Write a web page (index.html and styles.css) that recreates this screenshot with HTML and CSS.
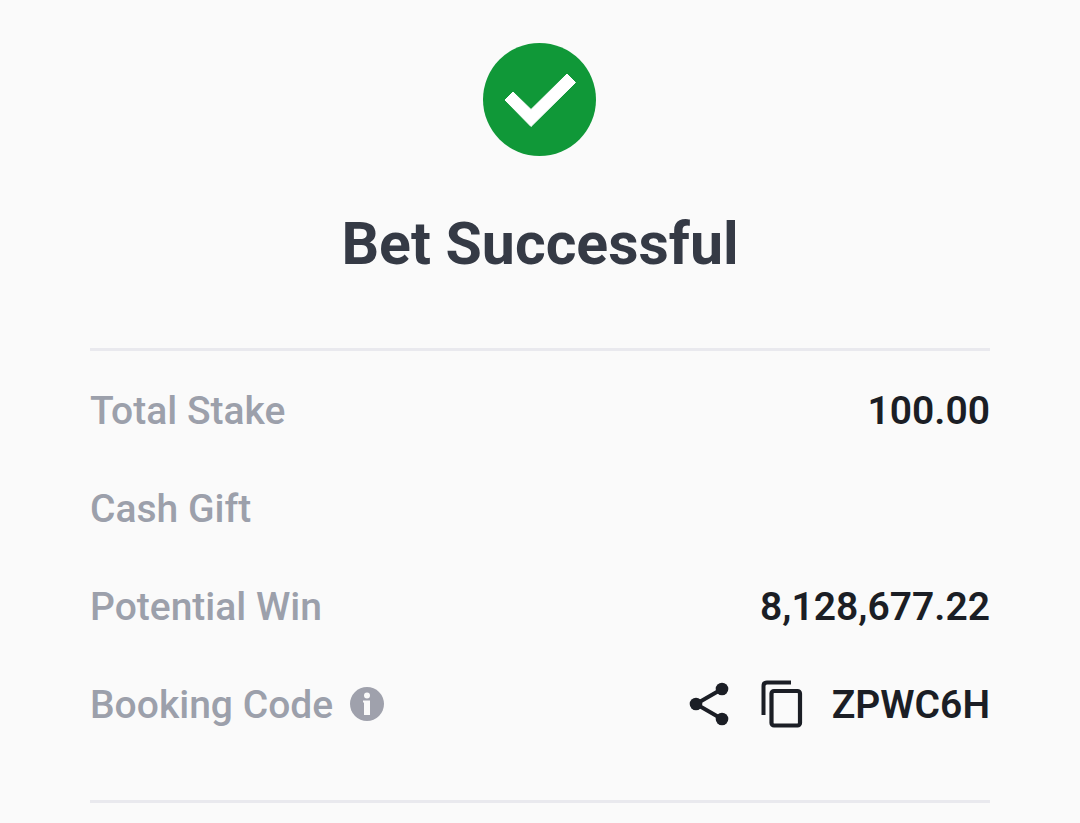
FILE: index.html
```html
<!DOCTYPE html>
<html lang="en">
<head>
<meta charset="utf-8">
<meta name="viewport" content="width=device-width, initial-scale=1">
<title>Bet Successful</title>
<link rel="stylesheet" href="styles.css">
</head>
<body>
<main class="receipt">
  <header class="status">
    <svg class="status-icon" viewBox="0 0 114 114" aria-hidden="true">
      <circle cx="56.500" cy="57.500" r="56.500" fill="#109838"/>
      <path d="M22 58 30 50 48 67.500 84 32 92.500 40.500 48 84.500z" fill="#fff" stroke="#fff" stroke-width="1" stroke-linejoin="round"/>
    </svg>
    <h1 class="title">Bet Successful</h1>
  </header>
  <dl class="details">
    <div class="row"><dt class="label">Total Stake</dt><dd class="value">100.00</dd></div>
    <div class="row"><dt class="label">Cash Gift</dt><dd class="value"></dd></div>
    <div class="row"><dt class="label">Potential Win</dt><dd class="value">8,128,677.22</dd></div>
    <div class="row">
      <dt class="label">Booking Code
        <button class="icon-button" type="button" aria-label="About booking code">
          <svg class="info-icon" viewBox="0 0 34 34" aria-hidden="true">
            <circle cx="17" cy="17" r="17" fill="#9fa1ac"/>
            <circle cx="17" cy="8.500" r="3" fill="#fafafa"/>
            <path d="M13 13.500h7V28h-6V15.500h-1z" fill="#fafafa"/>
          </svg>
        </button>
      </dt>
      <dd class="value">
        <span class="actions">
          <button class="icon-button" type="button" aria-label="Share">
            <svg class="share-icon" viewBox="0 0 40 44" aria-hidden="true">
              <path d="M33 7 7 22 33 37" fill="none" stroke="#1b1e25" stroke-width="4"/>
              <g fill="#1b1e25"><circle cx="33" cy="7" r="6.300"/><circle cx="7" cy="22" r="6.300"/><circle cx="33" cy="37" r="6.300"/></g>
            </svg>
          </button>
          <button class="icon-button" type="button" aria-label="Copy">
            <svg class="copy-icon" viewBox="0 0 42 48" aria-hidden="true">
              <path d="M2.500 35V6q0-3.500 3.500-3.500h24" fill="none" stroke="#1b1e25" stroke-width="4"/>
              <rect x="10.500" y="11" width="28.500" height="34.500" rx="2.500" fill="none" stroke="#1b1e25" stroke-width="4.200"/>
            </svg>
          </button>
        </span>
        <span class="code">ZPWC6H</span>
      </dd>
    </div>
  </dl>
</main>
</body>
</html>
```
FILE: styles.css
```css
* { box-sizing: border-box; }
body {
  margin: 0;
  background: #fafafa;
  font-family: Roboto, sans-serif;
}
.receipt { padding: 42px 90px 0; }
.status {
  display: flex;
  flex-direction: column;
  align-items: center;
  gap: 51px;
  padding-bottom: 67px;
}
.status-icon { width: 114px; height: 114px; }
.title {
  margin: 0;
  color: #353a45;
  font-size: 59px;
  font-weight: 700;
  line-height: 74px;
}
.details {
  margin: 0;
  padding: 11px 0 46px;
  border-top: 3px solid #e9e9ee;
  border-bottom: 3px solid #e9e9ee;
}
.row {
  display: flex;
  align-items: center;
  justify-content: space-between;
  height: 98px;
}
.label, .value {
  display: flex;
  align-items: center;
  margin: 0;
  font-size: 39px;
  line-height: 48px;
}
.label { gap: 17px; color: #9ca0ab; font-weight: 500; }
.value { gap: 29px; color: #1b1e25; font-weight: 600; }
.actions { display: flex; align-items: center; gap: 32px; }
.icon-button {
  display: flex;
  padding: 0 0 2px;
  border: 0;
  background: none;
  cursor: pointer;
}
.info-icon { width: 34px; height: 34px; }
.share-icon { width: 40px; height: 44px; }
.copy-icon { width: 42px; height: 48px; }
```
